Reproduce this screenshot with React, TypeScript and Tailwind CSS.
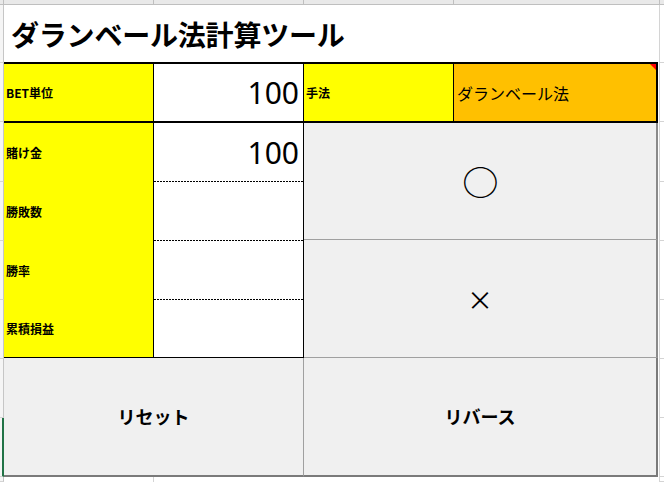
const ROWS = [58, 59, 60, 59, 59, 59, 59, 59, 5];

const COLS = ["w-[150px]", "w-[150px]", "w-[150px]", "w-[206px]"];

const LABELS = ["賭け金", "勝敗数", "勝率", "累積損益"];

function Gutter({ side }: { side: "left" | "right" }) {
  return (
    <div className={side === "left" ? "w-[4px] flex flex-col bg-[#f5f5f5]" : "flex-1 flex flex-col pl-px"}>
      {ROWS.map((h, i) => {
        const green = side === "left" && i === 7;
        return (
          <div
            key={i}
            style={{ height: h }}
            className={
              side === "left"
                ? green
                  ? "shrink-0 border-r-2 border-[#217346] border-b border-b-[#d4d4d4]"
                  : "shrink-0 border-r border-[#c6c6c6] border-b border-b-[#d4d4d4]"
                : "shrink-0 border-l border-[#d4d4d4] border-b"
            }
          />
        );
      })}
    </div>
  );
}

function DottedLine() {
  return <div className="h-px bg-[linear-gradient(to_right,#000_2px,transparent_2px)] bg-[length:3px_1px]" />;
}

export default function App() {
  return (
    <div className="w-[664px] h-[482px] overflow-hidden bg-white text-black flex flex-col font-['Noto_Sans_CJK_JP','Noto_Sans',sans-serif]">
      {/* column header strip, scrolled almost out of view */}
      <div className="flex h-[5px] shrink-0 bg-[#e9e9e9] border-b border-[#bfbfbf]">
        <div className="w-[4px] border-r border-[#bfbfbf]" />
        {COLS.map((w, i) => (
          <div key={i} className={`${w} border-r border-[#bfbfbf]`} />
        ))}
        <div className="flex-1" />
      </div>

      <div className="flex flex-1">
        <Gutter side="left" />

        <div className="w-[654px] flex flex-col">
          {/* title */}
          <div className="h-[57px] flex items-center pl-[7px] text-[28px] font-bold tracking-[-0.2px]">
            ダランベール法計算ツール
          </div>

          {/* row 1 */}
          <div className="h-[61px] flex border-t-2 border-b-2 border-r-2 border-black">
            <div className="w-[150px] bg-[#ffff00] border-r border-black flex items-center pl-[2px] text-[12px] font-bold">
              BET単位
            </div>
            <div className="w-[150px] border-r border-black flex items-center justify-end pr-[4px] font-['Noto_Sans',sans-serif] text-[30px]">
              100
            </div>
            <div className="w-[150px] bg-[#ffff00] border-r border-black flex items-center pl-[2px] text-[12px] font-bold">
              手法
            </div>
            <div className="relative flex-1 bg-[#ffc000] flex items-center pl-[3px] text-[16px]">
              ダランベール法
              <div className="absolute top-0 right-0 w-0 h-0 border-t-[6px] border-l-[6px] border-t-[#ff0000] border-l-transparent" />
            </div>
          </div>

          {/* middle */}
          <div className="h-[235px] flex">
            <div className="w-[300px] flex flex-col border-r border-b border-black">
              {LABELS.map((l, i) => (
                <div key={l} className={`flex ${i === 3 ? "h-[57px]" : "h-[59px]"}`}>
                  <div className="w-[150px] bg-[#ffff00] border-r border-black flex items-center pl-[2px] text-[12px] font-bold">
                    {l}
                  </div>
                  <div className="flex-1 flex flex-col">
                    <div className="flex-1 flex items-center justify-end pr-[4px] font-['Noto_Sans',sans-serif] text-[30px]">
                      {i === 0 ? "100" : ""}
                    </div>
                    {i < 3 && <DottedLine />}
                  </div>
                </div>
              ))}
            </div>
            <div className="flex-1 flex flex-col">
              <button className="h-[117px] bg-[#f0f0f0] border-b border-[#a0a0a0] border-r-2 border-r-[#8a8a8a] flex items-center justify-center">
                <span className="text-[33px] leading-none scale-x-[1.1]">○</span>
              </button>
              <button className="h-[118px] bg-[#f0f0f0] border-b border-[#a0a0a0] border-r-2 border-r-[#8a8a8a] flex items-center justify-center text-[26px] leading-none">
                ×
              </button>
            </div>
          </div>

          {/* buttons */}
          <div className="h-[119px] flex">
            <button className="w-[300px] bg-[#f0f0f0] border-r border-[#a0a0a0] border-b-2 border-b-[#7a7a7a] flex items-center justify-center text-[18px] font-bold">
              リセット
            </button>
            <button className="flex-1 bg-[#f0f0f0] border-r-2 border-r-[#7a7a7a] border-b-2 border-b-[#7a7a7a] flex items-center justify-center text-[18px] font-bold">
              リバース
            </button>
          </div>

          <div className="flex-1 flex">
            <div className="w-[150px] border-r border-[#d4d4d4]" />
          </div>
        </div>

        <Gutter side="right" />
      </div>
    </div>
  );
}
